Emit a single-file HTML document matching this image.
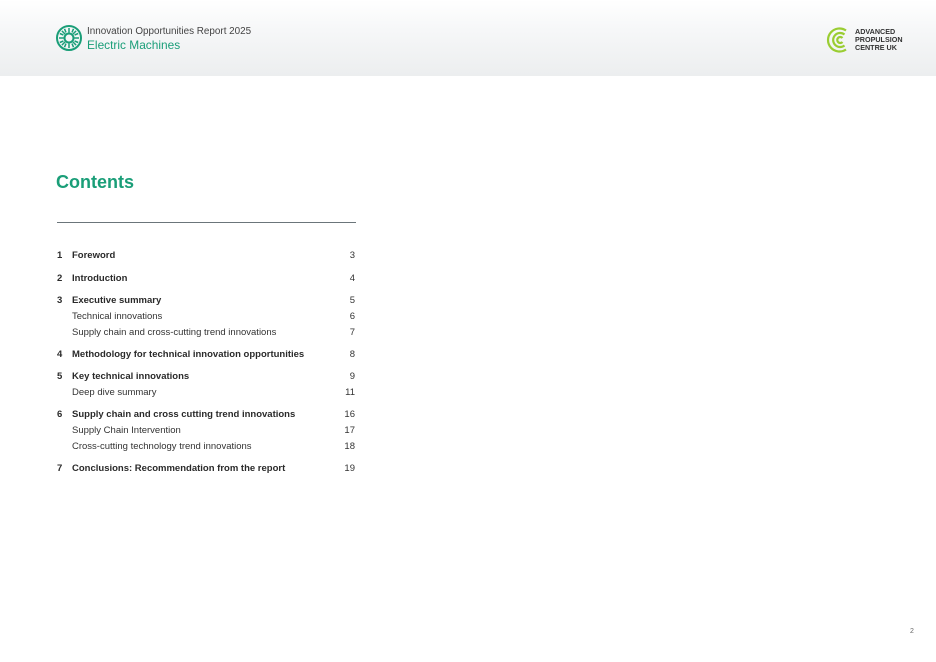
<!DOCTYPE html>
<html><head><meta charset="utf-8"><style>
*{margin:0;padding:0;box-sizing:border-box}
body{width:936px;height:662px;background:#fff;position:relative;overflow:hidden;font-family:"Liberation Sans",Arial,sans-serif;color:#333}
.hdr{position:absolute;left:0;top:0;width:936px;height:76px;background:linear-gradient(#fff 0%,#f6f7f8 40%,#eceeef 100%)}
.t{position:absolute;white-space:nowrap}
.r{position:absolute;font-size:9.5px;line-height:12px;white-space:nowrap;margin-top:1px}
.b{font-weight:bold;color:#2a2a2a}
.n{position:absolute;left:57px}
.tx{position:absolute;left:72px}
.p{position:absolute;right:581px;text-align:right}
</style></head><body>
<div class="hdr"></div>
<svg style="position:absolute;left:55px;top:24px" width="28" height="28" viewBox="0 0 28 28">
<g fill="none" stroke="#1a9e78">
<circle cx="14" cy="14" r="12" stroke-width="2"/>
<circle cx="14" cy="14" r="4.5" stroke-width="2"/>
<g stroke-width="1.5">
<path d="M14 4V8.5M14 19.5V24M4 14H8.5M19.5 14H24M6.9 6.9l3.2 3.2M17.9 17.9l3.2 3.2M21.1 6.9l-3.2 3.2M10.1 17.9l-3.2 3.2M9.5 4.8l1.5 3.6M17 19.6l1.5 3.6M18.5 4.8L17 8.4M11 19.6l-1.5 3.6M4.8 9.5l3.6 1.5M19.6 17l3.6 1.5M23.2 9.5L19.6 11M8.4 17l-3.6 1.5"/>
</g></g></svg>
<div class="t" style="left:87px;top:26px;font-size:9.9px;color:#444">Innovation Opportunities Report 2025</div>
<div class="t" style="left:87px;top:38px;font-size:11.9px;color:#1a9e78">Electric Machines</div>
<svg style="position:absolute;left:826px;top:26px" width="26" height="28" viewBox="0 0 26 28">
<g fill="none" stroke="#9acd32" stroke-width="2.2">
<path d="M20 4.5A11.5 11.5 0 1 0 20 23.5"/>
<path d="M18.5 8.5A7 7 0 1 0 18.5 19.5"/>
<path d="M16.5 12A3 3 0 1 0 16.5 16"/>
</g></svg>
<div class="t" style="left:855px;top:28px;font-size:7.2px;line-height:7.8px;color:#333;font-weight:bold">ADVANCED<br>PROPULSION<br>CENTRE UK</div>
<div class="t" style="left:56px;top:172px;font-size:18px;font-weight:bold;color:#1a9e78">Contents</div>
<div style="position:absolute;left:57px;top:222px;width:299px;height:1px;background:#6b757a"></div>

<div class="r b" style="top:249px"><span class="n">1</span><span class="tx">Foreword</span></div><div class="r p" style="top:249px">3</div>
<div class="r b" style="top:272px"><span class="n">2</span><span class="tx">Introduction</span></div><div class="r p" style="top:272px">4</div>
<div class="r b" style="top:294px"><span class="n">3</span><span class="tx">Executive summary</span></div><div class="r p" style="top:294px">5</div>
<div class="r" style="top:310px"><span class="tx">Technical innovations</span></div><div class="r p" style="top:310px">6</div>
<div class="r" style="top:326px"><span class="tx">Supply chain and cross-cutting trend innovations</span></div><div class="r p" style="top:326px">7</div>
<div class="r b" style="top:348px"><span class="n">4</span><span class="tx">Methodology for technical innovation opportunities</span></div><div class="r p" style="top:348px">8</div>
<div class="r b" style="top:370px"><span class="n">5</span><span class="tx">Key technical innovations</span></div><div class="r p" style="top:370px">9</div>
<div class="r" style="top:386px"><span class="tx">Deep dive summary</span></div><div class="r p" style="top:386px">11</div>
<div class="r b" style="top:408px"><span class="n">6</span><span class="tx">Supply chain and cross cutting trend innovations</span></div><div class="r p" style="top:408px">16</div>
<div class="r" style="top:424px"><span class="tx">Supply Chain Intervention</span></div><div class="r p" style="top:424px">17</div>
<div class="r" style="top:440px"><span class="tx">Cross-cutting technology trend innovations</span></div><div class="r p" style="top:440px">18</div>
<div class="r b" style="top:462px"><span class="n">7</span><span class="tx">Conclusions: Recommendation from the report</span></div><div class="r p" style="top:462px">19</div>

<div class="t" style="left:910px;top:628px;font-size:7px;color:#666">2</div>
</body></html>
